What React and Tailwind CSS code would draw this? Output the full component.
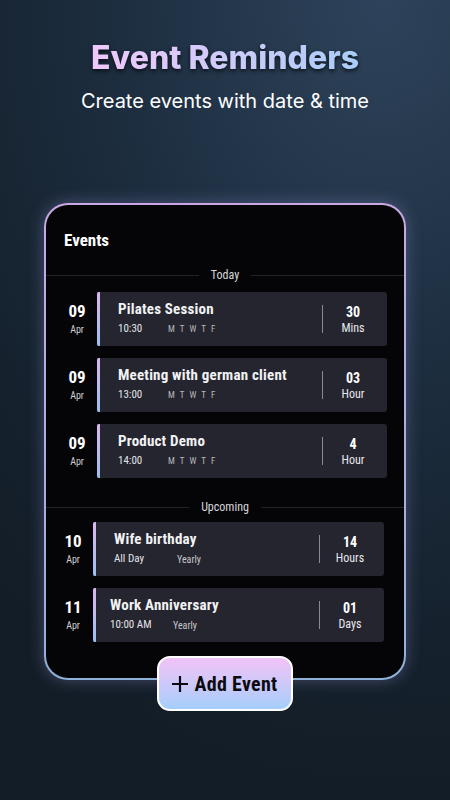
import React from 'react';

const today = [
  { day: '09', title: 'Pilates Session', time: '10:30', value: '30', unit: 'Mins' },
  { day: '09', title: 'Meeting with german client', time: '13:00', value: '03', unit: 'Hour' },
  { day: '09', title: 'Product Demo', time: '14:00', value: '4', unit: 'Hour' },
];

const upcoming = [
  { day: '10', title: 'Wife birthday', time: 'All Day', repeat: 'Yearly', value: '14', unit: 'Hours' },
  { day: '11', title: 'Work Anniversary', time: '10:00 AM', repeat: 'Yearly', value: '01', unit: 'Days' },
];

const uiFont = { fontFamily: '"Liberation Sans Narrow", "Roboto Condensed", Roboto, sans-serif' };

const Divider = ({ label }) => (
  <div className="flex items-center h-[18px]">
    <div className="flex-1 h-px bg-[#23232a]" />
    <span className="px-3 text-[12px] text-[#d8d8dc]">{label}</span>
    <div className="flex-1 h-px bg-[#23232a]" />
  </div>
);

const EventRow = ({ item, upcoming }) => (
  <div className={`flex items-center ${upcoming ? 'pl-[7px] pr-[20px]' : 'pl-[11px] pr-[17px]'}`}>
    {/* Date */}
    <div className="w-[40px] flex flex-col items-center">
      <span className="text-[17px] font-bold text-white leading-[20px]">{item.day}</span>
      <span className="text-[10px] text-[#d0d0d4] leading-[14px] mt-[2px]">Apr</span>
    </div>

    {/* Card */}
    <div className="flex-1 h-[54px] flex bg-[#25252f] rounded-r-[3px]">
      <div className="w-[3px] bg-linear-to-b from-[#dcb6f0] to-[#98bff0] rounded-l-[2px]" />
      <div className={`flex-1 flex flex-col justify-center ${item.title === 'Work Anniversary' ? 'pl-[14px]' : 'pl-[18px]'}`}>
        <span className="text-[15px] font-bold text-[#f2f2f4] leading-[18px] tracking-[0.2px]">{item.title}</span>
        <div className="flex items-center mt-[3px]">
          <span className={`text-[11px] text-[#e4e4e8] ${upcoming ? 'w-[63px]' : 'w-[50px]'}`}>{item.time}</span>
          {upcoming ? (
            <span className="text-[10px] text-[#c8c8cc]">{item.repeat}</span>
          ) : (
            <span className="text-[9px] text-[#b8b8bc] tracking-[5px]">MTWTF</span>
          )}
        </div>
      </div>
      <div className="flex items-center pr-[4px]">
        <div className="w-px h-[28px] bg-[#8a8a90]" />
        <div className="w-[60px] flex flex-col items-center pt-[2px]">
          <span className="text-[14px] font-bold text-white leading-[17px]">{item.value}</span>
          <span className="text-[12px] text-[#e8e8ec] leading-[15px]">{item.unit}</span>
        </div>
      </div>
    </div>
  </div>
);

export default function App() {
  return (
    <div className="w-[450px] h-[800px] overflow-hidden flex flex-col items-center bg-[radial-gradient(ellipse_130%_100%_at_85%_0%,#2e435b_0%,#1d2e40_45%,#15212d_80%,#131d27_100%)]">
      {/* Heading */}
      <h1
        className="mt-[39px] text-[32px] font-extrabold leading-[38px] bg-linear-to-r from-[#f0c8fb] to-[#a8cdf7] bg-clip-text text-transparent drop-shadow-[0_2px_2px_rgba(0,0,0,0.7)]"
        style={{ fontFamily: 'Inter, sans-serif' }}
      >
        Event Reminders
      </h1>
      <p className="mt-[11px] text-[20px] text-white leading-[26px]" style={{ fontFamily: 'Inter, sans-serif' }}>
        Create events with date &amp; time
      </p>

      {/* Phone frame */}
      <div
        className="mt-[89px] w-[362px] p-[2px] rounded-[24px] bg-linear-to-b from-[#c9a8e4] to-[#8fb2da] shadow-[0_0_16px_rgba(170,160,230,0.35)]"
        style={uiFont}
      >
        <div className="rounded-[22px] bg-[#050507] pb-[36px]">
          <div className="pl-[18px] pt-[23px] h-[61px]">
            <span className="text-[17px] font-bold text-white">Events</span>
          </div>
          <Divider label="Today" />
          <div className="flex flex-col gap-[12px] mt-[8px]">
            {today.map((e) => (
              <EventRow key={e.title} item={e} />
            ))}
          </div>
          <div className="mt-[20px]">
            <Divider label="Upcoming" />
          </div>
          <div className="flex flex-col gap-[12px] mt-[6px]">
            {upcoming.map((e) => (
              <EventRow key={e.title} item={e} upcoming />
            ))}
          </div>
        </div>
      </div>

      {/* Add button */}
      <button
        className="-mt-[24px] w-[136px] h-[55px] rounded-[13px] border-[2.5px] border-white bg-linear-to-b from-[#f1c2f7] to-[#a4cefb] flex items-center justify-center gap-[6px] text-[#0c0c10]"
        style={uiFont}
      >
        <svg width="16" height="16" viewBox="0 0 16 16" fill="none" stroke="currentColor" strokeWidth="2.2" strokeLinecap="square">
          <path d="M8 1v14M1 8h14" />
        </svg>
        <span className="text-[20px] font-bold tracking-[0.3px]">Add Event</span>
      </button>
    </div>
  );
}
